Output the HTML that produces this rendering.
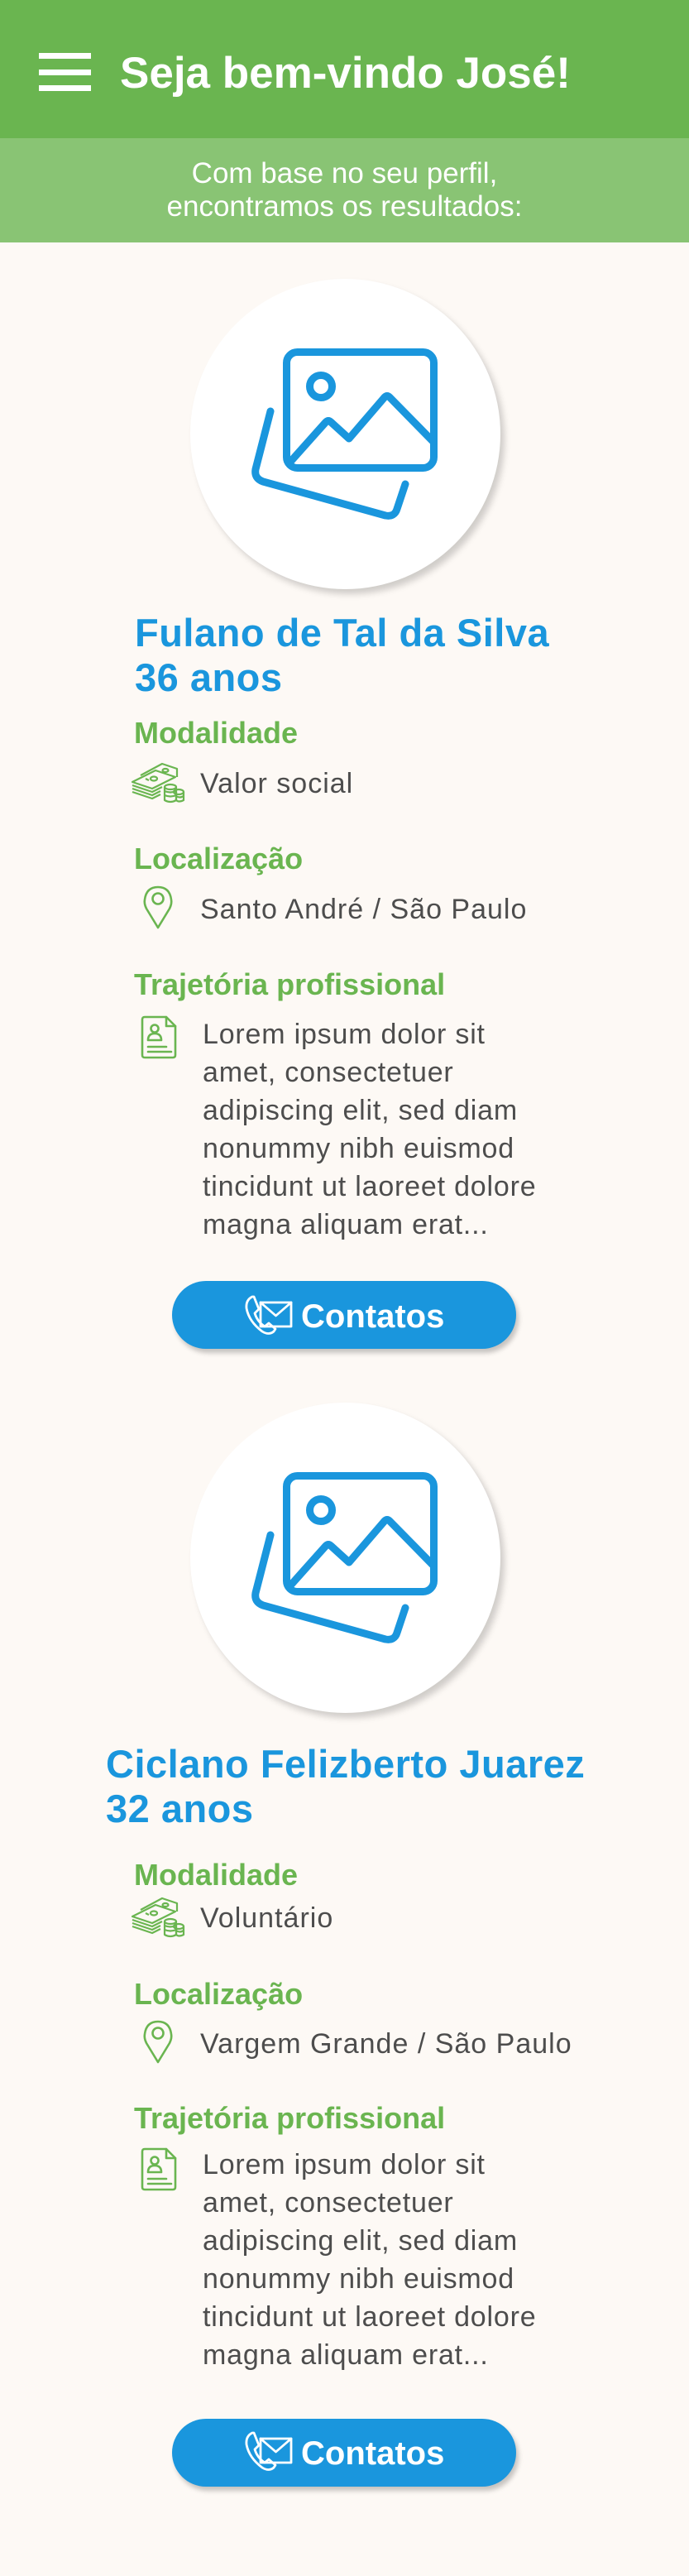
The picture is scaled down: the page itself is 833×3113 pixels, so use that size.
<!DOCTYPE html>
<html><head><meta charset="utf-8"><style>
*{margin:0;padding:0;box-sizing:border-box}
body{width:833px;height:3113px;background:#fdf9f5;position:relative;overflow:hidden;font-family:"Liberation Sans",sans-serif}
.t{position:absolute;white-space:nowrap}
.hdr{position:absolute;left:0;top:0;width:833px;height:167px;background:#6ab550}
.sub{position:absolute;left:0;top:167px;width:833px;height:126px;background:#89c474}
.bar{position:absolute;left:47px;width:63px;height:7px;background:#fff}
.name{font-size:47px;font-weight:bold;color:#1a96dd;line-height:54px;letter-spacing:0.5px}
.h{font-size:36px;font-weight:bold;color:#6ab550;line-height:40px}
.b{font-size:34px;color:#4d4d4d;line-height:40px;letter-spacing:1px}
.lorem{font-size:34px;color:#4d4d4d;line-height:46px;letter-spacing:0.8px}
.circ{position:absolute;left:230px;width:375px;height:375px;border-radius:50%;background:#fff;box-shadow:5px 6px 8px rgba(0,0,0,0.18)}
.btn{position:absolute;left:208px;width:416px;height:82px;border-radius:41px;background:#1a96dd;box-shadow:3px 5px 6px rgba(0,0,0,0.22)}
.bt{font-size:40px;font-weight:bold;color:#fff;line-height:48px}
svg{position:absolute;overflow:visible}
</style></head><body>
<div class="hdr"></div>
<div class="bar" style="top:64px"></div>
<div class="bar" style="top:84px"></div>
<div class="bar" style="top:103px"></div>
<div class="t" style="left:145px;top:59px;font-size:53px;font-weight:bold;color:#fff;line-height:60px">Seja bem-vindo José!</div>
<div class="sub"></div>
<div class="t" style="left:0;width:833px;text-align:center;top:190px;font-size:35px;color:#fff;line-height:40px">Com base no seu perfil,<br>encontramos os resultados:</div>

<!-- card 1 -->
<div class="circ" style="top:337px"></div>
<svg style="left:290px;top:410px" width="250" height="230" viewBox="0 0 250 230" fill="none" stroke="#1a96dd" stroke-width="9" stroke-linecap="round" stroke-linejoin="round">
<rect x="56.5" y="15.5" width="178" height="140" rx="13"/>
<circle cx="98" cy="57" r="13.5"/>
<path d="M62 147 L104 100 Q107 97 110 100 L132 120 L175 70 Q178 67 181 70 L234 124"/>
<path d="M37 87 L19 157 Q17 168 28 172 L176 213 Q187 215 190 205 L200 175"/>
</svg>
<div class="t name" style="left:163px;top:738px">Fulano de Tal da Silva<br>36 anos</div>
<div class="t h" style="left:162px;top:866px">Modalidade</div>
<svg style="left:158px;top:919px" width="66" height="52" viewBox="0 0 66 52" fill="none" stroke="#6ab550" stroke-width="2.2" stroke-linejoin="round">
<path d="M2 26 L30 12 L54 20 L26 34 Z"/><path d="M2 30 L26 38 L38 32"/><path d="M2 34 L26 42 L36 37"/><path d="M2 38 L26 46 L36 41"/>
<path d="M12 18 L38 4 L56 10 L56 20"/><path d="M22 24 L18 22"/><ellipse cx="28" cy="22" rx="4" ry="2.5"/><ellipse cx="42" cy="12" rx="3.5" ry="2"/>
<ellipse cx="48" cy="32" rx="7" ry="3"/><path d="M41 32 V48 Q48 52 55 48 V32"/><path d="M41 37 Q48 40 55 37 M41 42 Q48 45 55 42"/>
<ellipse cx="58" cy="38" rx="6" ry="3"/><path d="M55 38 V48 Q58 51 64 48 V38"/><path d="M55 43 Q59 46 64 43"/>
</svg>
<div class="t b" style="left:242px;top:927px">Valor social</div>
<div class="t h" style="left:162px;top:1018px">Localização</div>
<svg style="left:173px;top:1070px" width="36" height="53" viewBox="0 0 36 53" fill="none" stroke="#6ab550" stroke-width="2.6" stroke-linejoin="round">
<path d="M18 51 L4 28 Q1 22 2 17 Q4 2 18 2 Q32 2 34 17 Q35 22 32 28 Z"/><circle cx="18" cy="16" r="6.5"/>
</svg>
<div class="t b" style="left:242px;top:1079px">Santo André / São Paulo</div>
<div class="t h" style="left:162px;top:1170px">Trajetória profissional</div>
<svg style="left:171px;top:1227px" width="43" height="53" viewBox="0 0 43 53" fill="none" stroke="#6ab550" stroke-width="2.6" stroke-linejoin="round" stroke-linecap="round">
<path d="M4 2 H30 L41 13 V48 Q41 51 38 51 H4 Q1 51 1 48 V5 Q1 2 4 2 Z"/><path d="M30 2 V13 H41"/>
<circle cx="16" cy="16" r="4.5"/><path d="M8 30 Q8 22 16 22 Q24 22 24 30 Z"/><path d="M8 38 H30 M8 44 H36"/>
</svg>
<div class="t lorem" style="left:245px;top:1227px">Lorem ipsum dolor sit<br>amet, consectetuer<br>adipiscing elit, sed diam<br>nonummy nibh euismod<br>tincidunt ut laoreet dolore<br>magna aliquam erat...</div>
<div class="btn" style="top:1548px"></div>
<svg style="left:295px;top:1565px" width="60" height="50" viewBox="0 0 60 50" fill="none" stroke="#fff" stroke-width="2.8" stroke-linejoin="round" stroke-linecap="round">
<rect x="20" y="9" width="37" height="29"/><path d="M20 9 L38.5 25 L57 9"/>
<path d="M10 2 Q2 6 3 16 Q6 32 22 44 Q30 49 36 44 L38 41 L30 34 L25 38 Q16 32 13 22 L18 17 L12 2 Z"/>
</svg>
<div class="t bt" style="left:364px;top:1567px">Contatos</div>

<!-- card 2 -->
<div class="circ" style="top:1695px"></div>
<svg style="left:290px;top:1768px" width="250" height="230" viewBox="0 0 250 230" fill="none" stroke="#1a96dd" stroke-width="9" stroke-linecap="round" stroke-linejoin="round">
<rect x="56.5" y="15.5" width="178" height="140" rx="13"/>
<circle cx="98" cy="57" r="13.5"/>
<path d="M62 147 L104 100 Q107 97 110 100 L132 120 L175 70 Q178 67 181 70 L234 124"/>
<path d="M37 87 L19 157 Q17 168 28 172 L176 213 Q187 215 190 205 L200 175"/>
</svg>
<div class="t name" style="left:128px;top:2105px">Ciclano Felizberto Juarez<br>32 anos</div>
<div class="t h" style="left:162px;top:2246px">Modalidade</div>
<svg style="left:158px;top:2290px" width="66" height="52" viewBox="0 0 66 52" fill="none" stroke="#6ab550" stroke-width="2.2" stroke-linejoin="round">
<path d="M2 26 L30 12 L54 20 L26 34 Z"/><path d="M2 30 L26 38 L38 32"/><path d="M2 34 L26 42 L36 37"/><path d="M2 38 L26 46 L36 41"/>
<path d="M12 18 L38 4 L56 10 L56 20"/><path d="M22 24 L18 22"/><ellipse cx="28" cy="22" rx="4" ry="2.5"/><ellipse cx="42" cy="12" rx="3.5" ry="2"/>
<ellipse cx="48" cy="32" rx="7" ry="3"/><path d="M41 32 V48 Q48 52 55 48 V32"/><path d="M41 37 Q48 40 55 37 M41 42 Q48 45 55 42"/>
<ellipse cx="58" cy="38" rx="6" ry="3"/><path d="M55 38 V48 Q58 51 64 48 V38"/><path d="M55 43 Q59 46 64 43"/>
</svg>
<div class="t b" style="left:242px;top:2298px">Voluntário</div>
<div class="t h" style="left:162px;top:2390px">Localização</div>
<svg style="left:173px;top:2441px" width="36" height="53" viewBox="0 0 36 53" fill="none" stroke="#6ab550" stroke-width="2.6" stroke-linejoin="round">
<path d="M18 51 L4 28 Q1 22 2 17 Q4 2 18 2 Q32 2 34 17 Q35 22 32 28 Z"/><circle cx="18" cy="16" r="6.5"/>
</svg>
<div class="t b" style="left:242px;top:2450px">Vargem Grande / São Paulo</div>
<div class="t h" style="left:162px;top:2540px">Trajetória profissional</div>
<svg style="left:171px;top:2595px" width="43" height="53" viewBox="0 0 43 53" fill="none" stroke="#6ab550" stroke-width="2.6" stroke-linejoin="round" stroke-linecap="round">
<path d="M4 2 H30 L41 13 V48 Q41 51 38 51 H4 Q1 51 1 48 V5 Q1 2 4 2 Z"/><path d="M30 2 V13 H41"/>
<circle cx="16" cy="16" r="4.5"/><path d="M8 30 Q8 22 16 22 Q24 22 24 30 Z"/><path d="M8 38 H30 M8 44 H36"/>
</svg>
<div class="t lorem" style="left:245px;top:2593px">Lorem ipsum dolor sit<br>amet, consectetuer<br>adipiscing elit, sed diam<br>nonummy nibh euismod<br>tincidunt ut laoreet dolore<br>magna aliquam erat...</div>
<div class="btn" style="top:2923px"></div>
<svg style="left:295px;top:2938px" width="60" height="50" viewBox="0 0 60 50" fill="none" stroke="#fff" stroke-width="2.8" stroke-linejoin="round" stroke-linecap="round">
<rect x="20" y="9" width="37" height="29"/><path d="M20 9 L38.5 25 L57 9"/>
<path d="M10 2 Q2 6 3 16 Q6 32 22 44 Q30 49 36 44 L38 41 L30 34 L25 38 Q16 32 13 22 L18 17 L12 2 Z"/>
</svg>
<div class="t bt" style="left:364px;top:2941px">Contatos</div>
</body></html>
